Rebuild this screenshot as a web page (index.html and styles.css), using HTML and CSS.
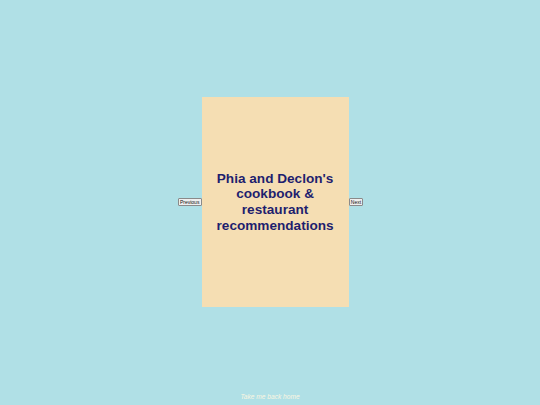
FILE: index.html
```html
<!DOCTYPE html>
<html lang="en">
<head>
<meta charset="utf-8">
<title>Phia and Declon's cookbook</title>
<link rel="stylesheet" href="styles.css">
</head>
<body>
<div class="page">
  <div class="viewer">
    <button class="nav-btn">Previous</button>
    <div class="book">
      <h1 class="title">Phia and Declon's cookbook &amp; restaurant recommendations</h1>
    </div>
    <button class="nav-btn">Next</button>
  </div>
  <a class="home-link" href="#">Take me back home</a>
</div>
</body>
</html>
```

FILE: styles.css
```css
html, body {
  margin: 0;
  padding: 0;
  background: #b0e0e6;
}
.page {
  width: 540px;
  height: 405px;
  display: flex;
  flex-direction: column;
  align-items: center;
  padding-top: 97px;
  box-sizing: border-box;
  font-family: "Liberation Sans", Arial, sans-serif;
}
.viewer {
  display: flex;
  align-items: center;
  margin-left: 1px;
}
.book {
  width: 147px;
  height: 210px;
  background: #f5deb3;
  display: flex;
  align-items: center;
  justify-content: center;
}
.title {
  margin: 0;
  font-size: 13.6px;
  line-height: 15.6px;
  font-weight: bold;
  color: #1e1e6e;
  text-align: center;
}
.nav-btn {
  font-family: "Liberation Sans", Arial, sans-serif;
  font-size: 5px;
  line-height: 6px;
  height: 8px;
  padding: 0 1.2px;
  margin: 0;
  border: 0.5px solid #8a8a8a;
  border-radius: 1px;
  background: #efefef;
  color: #111;
}
.home-link {
  margin-top: 86px;
  font-size: 6.6px;
  line-height: 8px;
  font-style: italic;
  color: #fbf6e2;
  text-decoration: none;
}
```
